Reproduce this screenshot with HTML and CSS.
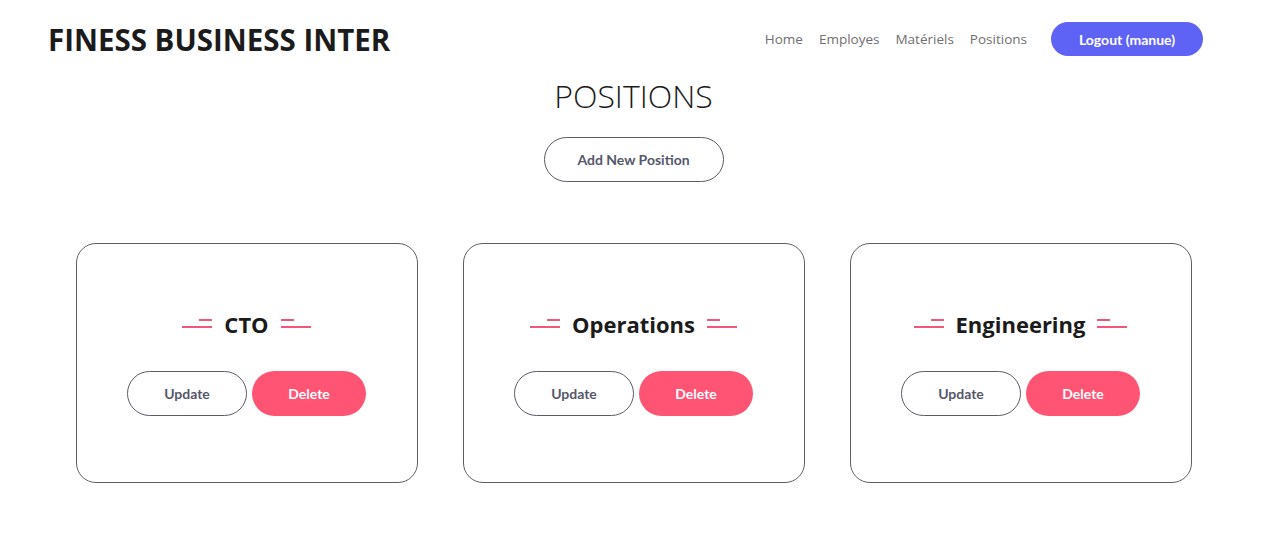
FILE: index.html
```html
<!DOCTYPE html>
<html lang="fr">
<head>
<meta charset="utf-8">
<title>Positions</title>
<link rel="stylesheet" href="styles.css">
</head>
<body>
<header class="topbar">
  <div class="brand">FINESS BUSINESS INTER</div>
  <nav class="nav">
    <a href="#" class="nav-link">Home</a>
    <a href="#" class="nav-link">Employes</a>
    <a href="#" class="nav-link">Matériels</a>
    <a href="#" class="nav-link">Positions</a>
    <a href="#" class="btn-logout">Logout (manue)</a>
  </nav>
</header>
<main class="page">
  <h1 class="page-title">POSITIONS</h1>
  <div class="add-row"><button class="btn btn-outline btn-add">Add New Position</button></div>
  <section class="cards">
    <article class="card">
      <h2 class="card-title"><span class="deco deco-left"></span>CTO<span class="deco deco-right"></span></h2>
      <div class="actions"><button class="btn btn-outline">Update</button><button class="btn btn-danger">Delete</button></div>
    </article>
    <article class="card">
      <h2 class="card-title"><span class="deco deco-left"></span>Operations<span class="deco deco-right"></span></h2>
      <div class="actions"><button class="btn btn-outline">Update</button><button class="btn btn-danger">Delete</button></div>
    </article>
    <article class="card">
      <h2 class="card-title"><span class="deco deco-left"></span>Engineering<span class="deco deco-right"></span></h2>
      <div class="actions"><button class="btn btn-outline">Update</button><button class="btn btn-danger">Delete</button></div>
    </article>
  </section>
</main>
</body>
</html>
```
FILE: styles.css
```css
* { box-sizing: border-box; }
body {
  margin: 0;
  background: #fff;
  font-family: "Open Sans", "Noto Sans", sans-serif;
  color: #1c1c1c;
}
.topbar {
  height: 78px;
  display: flex;
  align-items: center;
  justify-content: space-between;
  padding: 0 64px 0 48px;
}
.brand {
  font-size: 29.5px;
  font-weight: 700;
  color: #1b1b1b;
  letter-spacing: 0;
}
.nav {
  display: flex;
  align-items: center;
  gap: 16px;
}
.nav-link {
  font-size: 13.5px;
  color: #6f6f6f;
  text-decoration: none;
}
.btn-logout {
  margin-left: 8px;
  width: 152px;
  height: 34px;
  border-radius: 17px;
  background: #5f63f5;
  color: #fff;
  font-family: "Lato", sans-serif;
  font-weight: 700;
  font-size: 14px;
  text-decoration: none;
  display: flex;
  align-items: center;
  justify-content: center;
}
.page { display: flex; flex-direction: column; align-items: center; }
.page-title {
  margin: -2px 0 0;
  font-size: 32px;
  font-weight: 300;
  line-height: 40px;
  color: #1c1c1c;
}
.add-row { margin-top: 21px; }
.btn {
  height: 45px;
  border-radius: 23px;
  font-family: "Lato", sans-serif;
  font-weight: 700;
  font-size: 14px;
  display: inline-flex;
  align-items: center;
  justify-content: center;
  cursor: pointer;
}
.btn-outline {
  background: #fff;
  border: 1px solid #5c5c66;
  color: #55576a;
  width: 120px;
}
.btn-add { width: 180px; }
.btn-danger {
  background: #ff5474;
  border: none;
  color: #fff;
  width: 114px;
}
.cards {
  margin-top: 61px;
  display: flex;
  gap: 45px;
}
.card {
  width: 342px;
  height: 240px;
  border: 1px solid #5f5f5f;
  border-radius: 20px;
  display: flex;
  flex-direction: column;
  align-items: center;
  justify-content: center;
  gap: 31px;
  padding-bottom: 2px;
}
.card-title {
  margin: 0;
  height: 32px;
  display: flex;
  align-items: center;
  font-size: 22px;
  font-weight: 700;
  color: #1b1b1b;
}
.deco {
  position: relative;
  width: 30px;
  height: 16px;
}
.deco-left { margin-right: 12px; }
.deco-right { margin-left: 12px; }
.deco::before, .deco::after {
  content: "";
  position: absolute;
  height: 2px;
  background: #f2577a;
}
.deco::before { top: 3px; width: 13px; }
.deco::after { top: 10px; left: 0; width: 30px; }
.deco-left::before { right: 0; }
.deco-right::before { left: 0; }
.actions { display: flex; gap: 5px; }
```
